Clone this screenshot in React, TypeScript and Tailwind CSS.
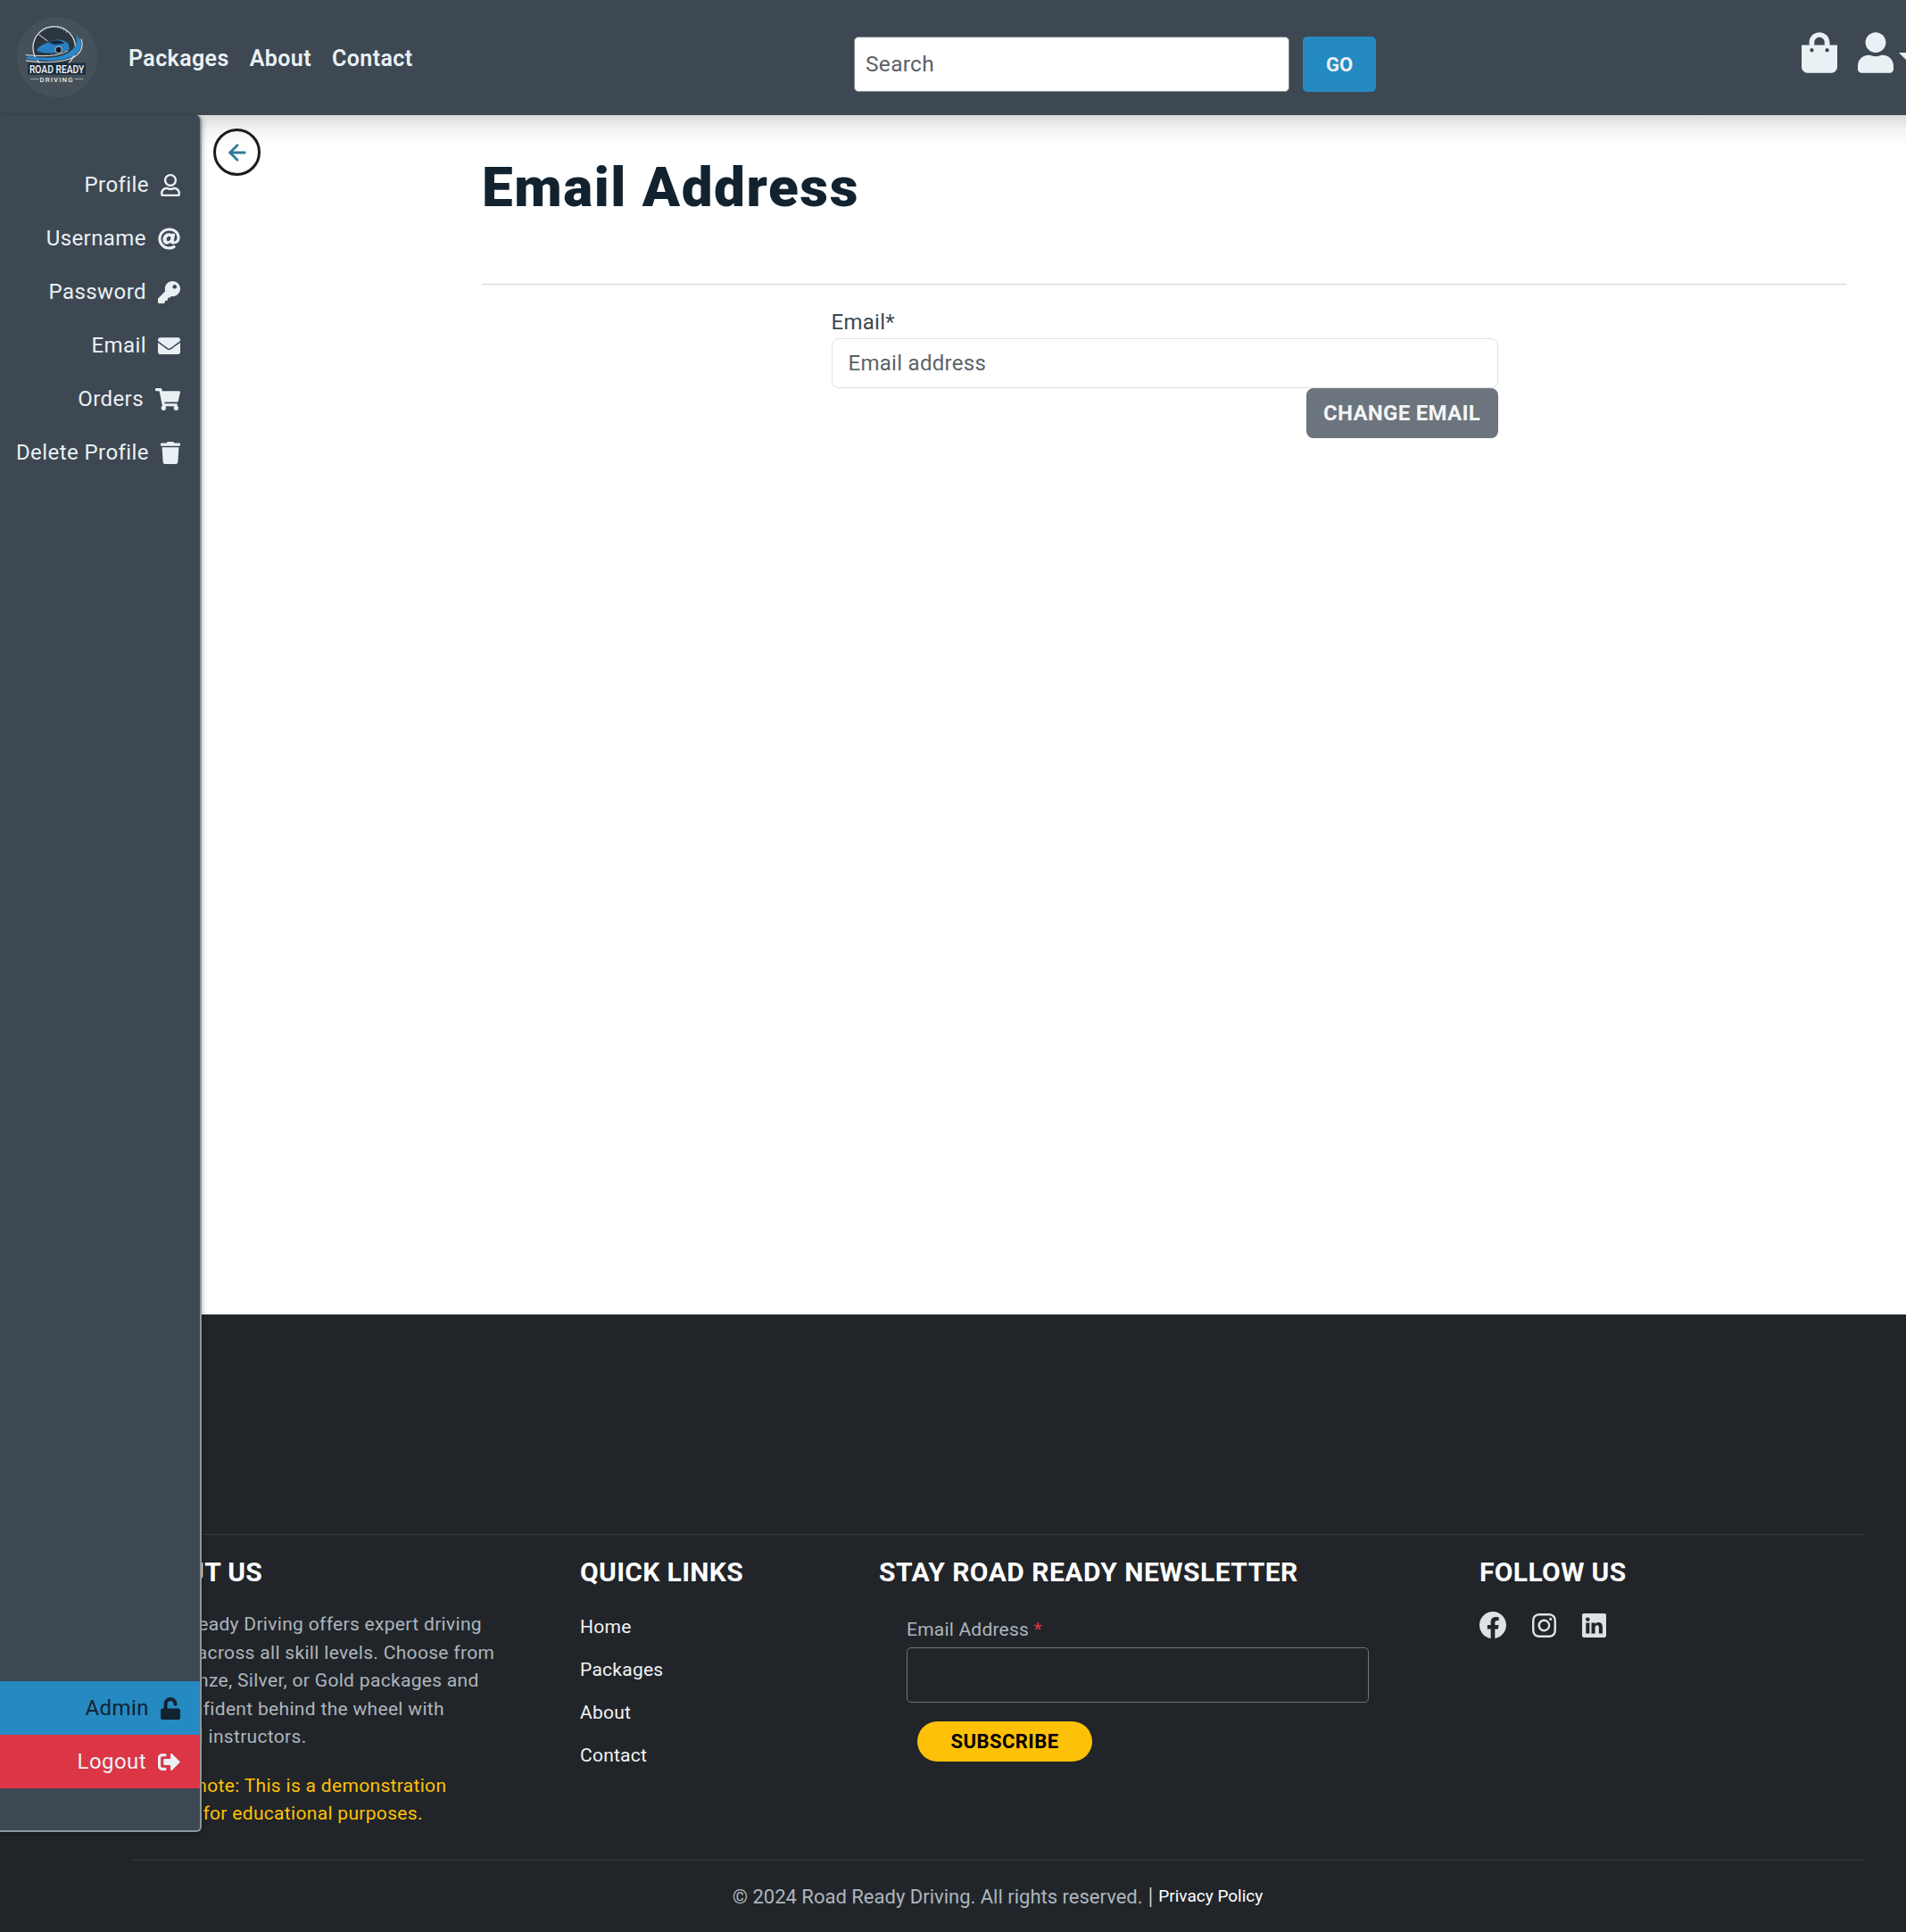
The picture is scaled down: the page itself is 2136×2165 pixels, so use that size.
import React from "react";
import { FaRegUser, FaAt, FaKey, FaEnvelope, FaShoppingCart, FaTrash, FaUnlock, FaSignOutAlt, FaShoppingBag, FaUser } from "react-icons/fa";
import { BsFacebook, BsInstagram, BsLinkedin } from "react-icons/bs";
import { ArrowLeft } from "lucide-react";

function Logo() {
  return (
    <svg width="90" height="90" viewBox="0 0 110 110" className="shrink-0">
      <circle cx="55" cy="55" r="55" fill="#465059" />
      <circle cx="51" cy="42" r="29" fill="#2c3640" stroke="#e4e9ec" strokeWidth="1.5" />
      <path d="M30 24 L42 33" stroke="#e4e9ec" strokeWidth="1.2" />
      <path d="M34 19 A27 27 0 0 1 70 22" stroke="#9fb0bd" strokeWidth="2.5" strokeDasharray="1.5 3" fill="none" />
      <path d="M27 46 C31 37 42 36 47 33 C55 30 64 31 70 36 L72 44 C62 50 38 52 27 46Z" fill="#2a7fc0" />
      <path d="M44 35 C50 31 60 31 65 36 L52 38Z" fill="#16283a" />
      <circle cx="57" cy="45" r="4.5" fill="#101820" stroke="#cfd8de" strokeWidth="1" />
      <path d="M14 54 C34 56 60 58 74 46 C82 40 84 32 81 24 C92 34 90 46 76 54 C60 62 34 60 14 58Z" fill="#2b86c9" />
      <path d="M12 52 C32 54 56 55 70 46" stroke="#dfe5e9" strokeWidth="1.2" fill="none" />
      <path d="M12 60 C36 63 62 63 78 55 C86 50 92 42 88 30" stroke="#dfe5e9" strokeWidth="1.3" fill="none" />
      <rect x="15" y="63" width="79" height="16" fill="#1c2c3e" />
      <text x="54.5" y="76.5" textAnchor="middle" fontFamily="Roboto, sans-serif" fontWeight="500" fontSize="16.5" textLength="75" lengthAdjust="spacingAndGlyphs" fill="#f2f5f7">ROAD READY</text>
      <path d="M18 85 H30 M79 85 H91" stroke="#aeb8bf" strokeWidth="1" />
      <text x="54.5" y="89" textAnchor="middle" fontFamily="Roboto, sans-serif" fontWeight="500" fontSize="9.5" letterSpacing="1.4" fill="#e4e9ec">DRIVING</text>
    </svg>
  );
}

const items: [string, React.ComponentType<{ className?: string }>, string][] = [
  ["Profile", FaRegUser, "w-[22px]"],
  ["Username", FaAt, "w-[25px]"],
  ["Password", FaKey, "w-[25px]"],
  ["Email", FaEnvelope, "w-[25px]"],
  ["Orders", FaShoppingCart, "w-[28px]"],
  ["Delete Profile", FaTrash, "w-[22px]"],
];

export default function App() {
  return (
    <div className="relative w-full h-[2165px] overflow-hidden bg-white [font-family:Roboto,sans-serif] text-[#3d4852]">
      <header className="relative z-10 h-[129px] bg-[#3e4852] flex items-start">
        <div className="w-[957px] shrink-0 flex items-center h-[129px] pl-[19px] pb-[1px]">
          <Logo />
          <nav className="flex gap-[23px] ml-[35px] mt-[4px] text-[25px] font-semibold text-[#e9f1f4] tracking-[0.016em]">
            <a>Packages</a>
            <a>About</a>
            <a>Contact</a>
          </nav>
        </div>
        <div className="flex gap-[15px] mt-[41px] shrink-0">
          <div className="w-[488px] h-[62px] bg-white border border-[#7f8a93] rounded-[5px] flex items-center pl-[12px] pt-[1px] text-[24.5px] text-[#5b6268] tracking-[0.012em]">Search</div>
          <button className="w-[82px] h-[62px] bg-[#2589c2] rounded-[5px] text-[22px] font-bold text-[#e9f1f4]">GO</button>
        </div>
        <div className="flex items-start gap-[23px] ml-[477px] mt-[36px] shrink-0 text-[#e9f1f4]">
          <FaShoppingBag className="w-[40px] h-[46px]" />
          <FaUser className="w-[40px] h-[46px]" />
          <div className="mt-[23px] -ml-[17px] w-0 h-0 border-x-[9px] border-x-transparent border-t-[9px] border-t-[#e9f1f4]" />
        </div>
      </header>

      <aside className="absolute z-20 left-0 top-[129px] w-[226px] h-[1924px] bg-[#3e4852] border-r-2 border-b-2 border-[#8d979e] rounded-r-[6px] shadow-[0_2px_6px_rgba(0,0,0,0.35)] flex flex-col justify-between pt-[48px] pb-[47px] text-[24px] text-[#e9f1f4]">
        <div className="flex flex-col">
          {items.map(([label, Icon, w]) => (
            <a key={label} className="h-[60px] flex items-center justify-end gap-[13px] pr-[22px] tracking-[0.018em]">
              <span>{label}</span>
              <Icon className={`h-[25px] shrink-0 ${w}`} />
            </a>
          ))}
        </div>
        <div className="flex flex-col">
          <a className="h-[60px] bg-[#2589c2] text-[#12222f] flex items-center justify-end gap-[13px] pr-[22px] tracking-[0.018em]">
            <span>Admin</span>
            <FaUnlock className="h-[25px] w-[22px] shrink-0" />
          </a>
          <a className="h-[60px] bg-[#dc3545] flex items-center justify-end gap-[13px] pr-[22px] tracking-[0.018em]">
            <span>Logout</span>
            <FaSignOutAlt className="h-[25px] w-[25px] shrink-0" />
          </a>
        </div>
      </aside>

      <main className="relative h-[1344px]">
        <div className="absolute inset-x-0 top-0 h-[36px] bg-gradient-to-b from-[#dbdbdb] via-[#f5f5f5] via-50% to-white" />
        <button className="absolute left-[239px] top-[15px] w-[53px] h-[53px] rounded-full border-[3px] border-[#1b1b1b] flex items-center justify-center text-[#2f7a9a]">
          <ArrowLeft size={28} strokeWidth={2.4} />
        </button>
        <div className="relative ml-[540px] mr-[66px] pt-[44px]">
          <h1 className="text-[62px] leading-[74px] font-black text-[#12222f] tracking-[0.025em]">Email Address</h1>
          <div className="mt-[71px] h-[1px] bg-[#cfd2d4]" />
          <form className="mx-auto w-[747px] mt-[26px]">
            <label className="block text-[24px] leading-[32px] text-[#3d4852] tracking-[0.012em]">Email*</label>
            <div className="h-[56px] mt-[2px] border border-[#dfe2e6] rounded-[8px] flex items-center pl-[18px] text-[24px] text-[#5b6268] tracking-[0.012em]">Email address</div>
            <div className="flex justify-end">
              <button className="w-[215px] h-[56px] rounded-[8px] bg-[#6c757d] text-[24px] font-bold text-[#f4f6f7] tracking-[0.012em]">CHANGE EMAIL</button>
            </div>
          </form>
        </div>
      </main>

      <footer className="h-[692px] bg-[#212529] pt-[246px] pl-[146px] pr-[46px]">
        <div className="h-[1px] bg-[#33383d] ml-[40px]" />
        <div className="grid grid-cols-[504px_335px_673px_1fr] h-[364px]">
          <div className="pt-[23px] pl-[8px]">
            <h5 className="text-[30px] leading-[38px] font-bold text-white tracking-[0.012em] -ml-[6px]">ABOUT US</h5>
            <div className="mt-[24px] text-[21px] leading-[31.5px] text-[#adb5bd] whitespace-nowrap tracking-[0.015em]">
              <p>Road Ready Driving offers expert driving</p>
              <p>tuition across all skill levels. Choose from</p>
              <p className="-ml-[2px]">our Bronze, Silver, or Gold packages and</p>
              <p className="-ml-[3px]">feel confident behind the wheel with</p>
              <p className="-ml-[6px]">certified instructors.</p>
              <p className="mt-[23px] -ml-[4px] text-[#ffc107]">Please note: This is a demonstration</p>
              <p className="ml-[1px] text-[#ffc107]">project for educational purposes.</p>
            </div>
          </div>
          <div className="pt-[23px]">
            <h5 className="text-[30px] leading-[38px] font-bold text-white tracking-[0.012em]">QUICK LINKS</h5>
            <ul className="mt-[18px] text-[21px] leading-[48px] text-[#f1f3f5] tracking-[0.012em]">
              <li>Home</li>
              <li>Packages</li>
              <li>About</li>
              <li>Contact</li>
            </ul>
          </div>
          <div className="pt-[23px]">
            <h5 className="text-[30px] leading-[38px] font-bold text-white tracking-[0.016em]">STAY ROAD READY NEWSLETTER</h5>
            <div className="pl-[31px] w-[549px] mt-[31px]">
              <label className="block text-[21px] leading-[28px] text-[#adb5bd] tracking-[0.01em]">Email Address <span className="text-[#dc3545]">*</span></label>
              <div className="mt-[6px] h-[62px] border border-[#6c757d] rounded-[5px]" />
              <button className="mt-[21px] ml-[12px] w-[196px] h-[45px] rounded-full bg-[#ffc107] text-black font-bold text-[22px] tracking-[0.02em]">SUBSCRIBE</button>
            </div>
          </div>
          <div className="pt-[23px]">
            <h5 className="text-[30px] leading-[38px] font-bold text-white tracking-[0.012em]">FOLLOW US</h5>
            <div className="flex items-center mt-[25px] text-[#dee2e6]">
              <BsFacebook size={30} />
              <BsInstagram size={27} className="ml-[29px]" />
              <BsLinkedin size={27} className="ml-[29px]" />
            </div>
          </div>
        </div>
        <div className="h-[1px] bg-[#33383d]" />
        <div className="h-[81px] flex items-center justify-center text-[22px] text-[#adb5bd]">
          <span>© 2024 Road Ready Driving. All rights reserved.</span>
          <span className="mx-[6px] text-[26px] font-light text-[#e6e8ea]">|</span>
          <a className="text-[19px] text-white">Privacy Policy</a>
        </div>
      </footer>
    </div>
  );
}
